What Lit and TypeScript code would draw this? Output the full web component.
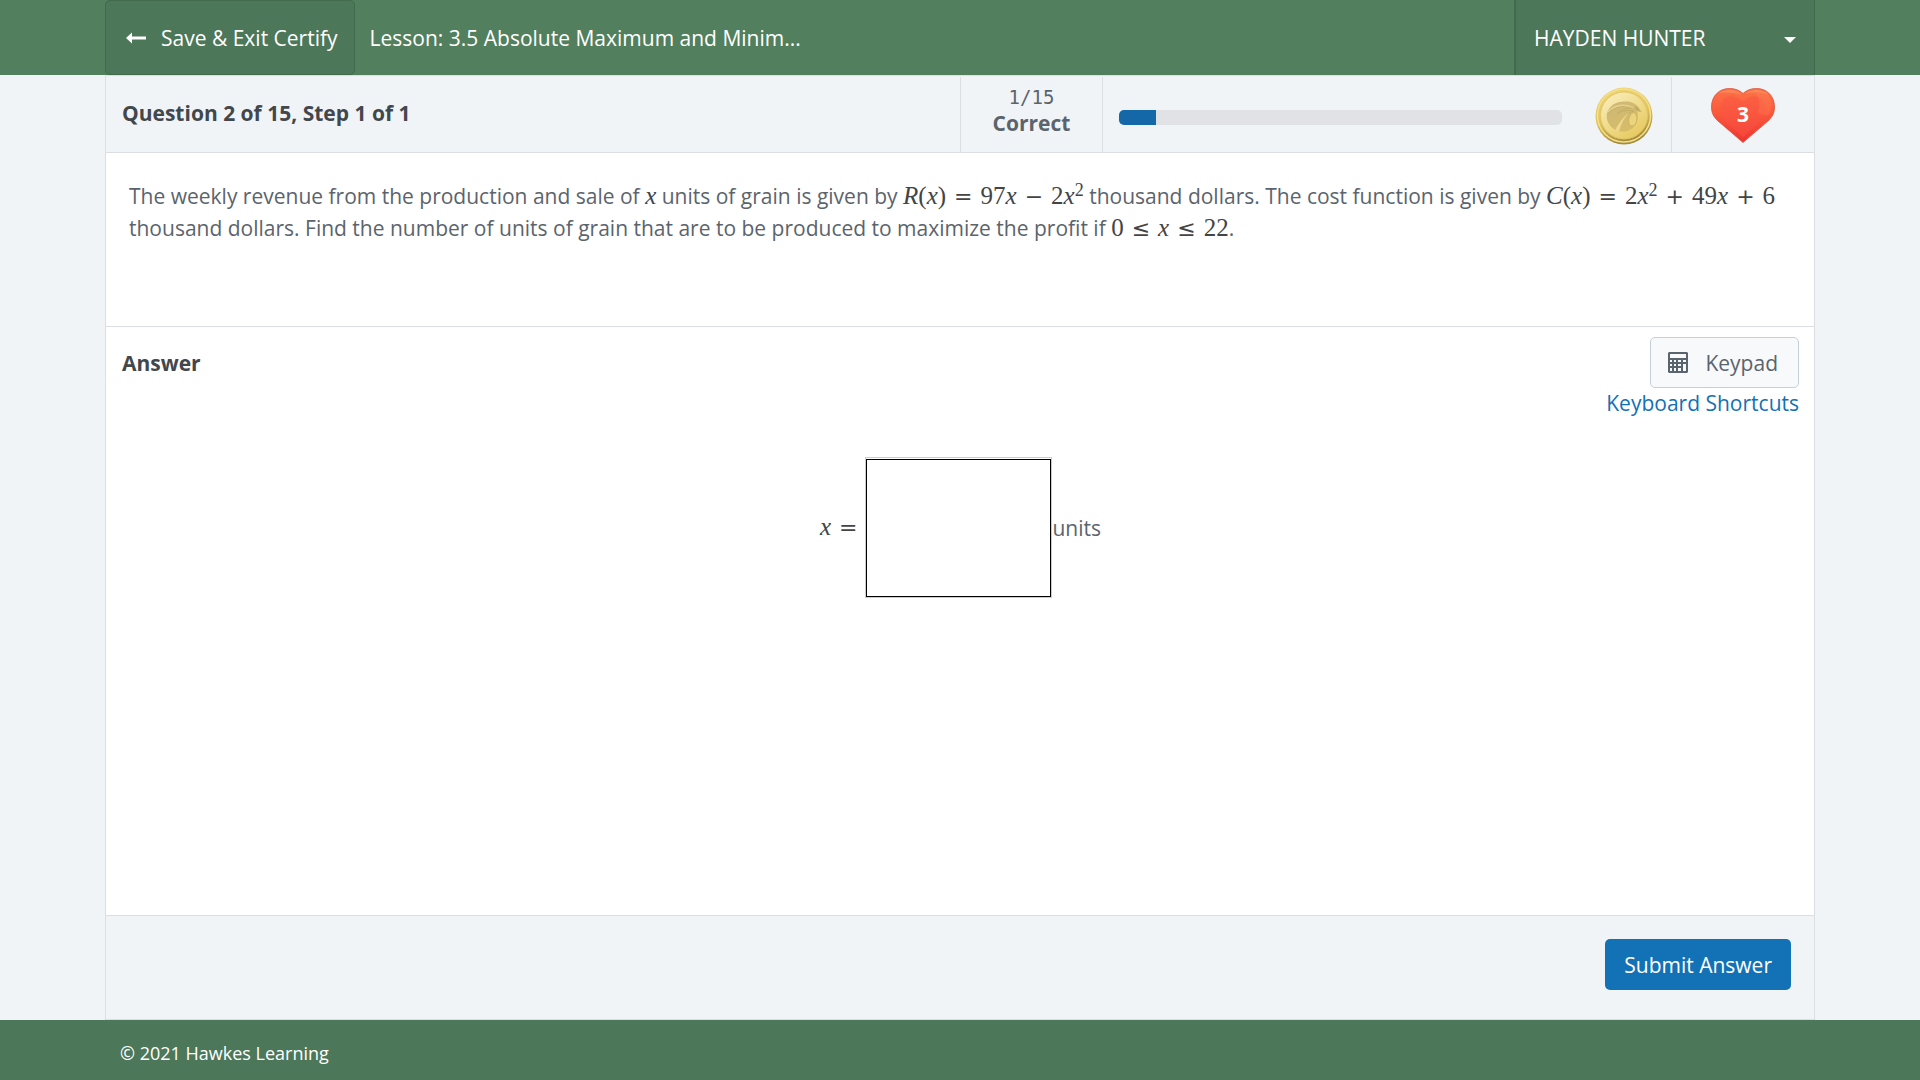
import { LitElement, html, svg, css } from "lit";
import { customElement, property, state } from "lit/decorators.js";

const arrow = svg`<path d="M6 1.5v4h14v3H6v4L0 7z" fill="#fff"/>`;

@customElement("reward-coin")
export class RewardCoin extends LitElement {
  static styles = css`
    :host { display: block; }
    .coin { display: block; width: 58px; height: 58px; }
  `;

  render() {
    return html`<svg class="coin" viewBox="0 0 58 58" role="img" aria-label="Mastery coin">
      <defs>
        <linearGradient id="rim" x1="0" y1="0" x2="0.3" y2="1">
          <stop offset="0" stop-color="#f0d87c" />
          <stop offset="0.6" stop-color="#dfc25c" />
          <stop offset="1" stop-color="#a38c3c" />
        </linearGradient>
        <linearGradient id="face" x1="0.1" y1="0" x2="0.8" y2="1">
          <stop offset="0" stop-color="#fbeec0" />
          <stop offset="0.5" stop-color="#f0dc8c" />
          <stop offset="1" stop-color="#e6c75c" />
        </linearGradient>
        <linearGradient id="hawk" x1="0" y1="0" x2="0.6" y2="1">
          <stop offset="0" stop-color="#cdb878" />
          <stop offset="1" stop-color="#d6bd68" />
        </linearGradient>
      </defs>
      <circle cx="29" cy="29" r="28.5" fill="url(#rim)" />
      <circle cx="29" cy="28.5" r="26.5" fill="none" stroke="#f6df88" stroke-width="1.5" />
      <circle cx="29" cy="28.5" r="23.5" fill="url(#face)" stroke="#e2c868" stroke-width="1" />
      <path d="M12 27C14 18 22 14 31 14.500C37 14.500 43 17 46.500 25L42.500 24.500C43.500 32 42 39 35 43C28 46.500 18 44 14 37C11.800 33.500 11.300 30.500 12 27Z" fill="url(#hawk)" />
      <path d="M12.500 27C19 19.500 28 17.500 37 21C31 21 25 23 22 27C27 24 33 22.500 39 24C31 26 25 34 20.500 43" fill="none" stroke="#bfa962" stroke-width="0.7" />
      <path d="M13 25C19 18.500 28 16.500 38 20.500" fill="none" stroke="#e6d28e" stroke-width="1.3" />
      <path d="M34 25.500C28 30 23 37 20 43.500L24 44.500C26 37 29 31 34 25.500Z" fill="#eed78c" />
      <path d="M39 25C34 28 32.500 33 34.500 38C36.500 40 39.500 39 41 36C42.500 32 42 28 39 25Z" fill="#ecd47c" stroke="#c6ad60" stroke-width="0.8" />
      <path d="M40 18.500L46 25L41 22.500Z" fill="#b9a35e" />
    </svg>`;
  }
}

@customElement("lives-heart")
export class LivesHeart extends LitElement {
  @property({ type: Number }) count = 0;

  static styles = css`
    :host { display: grid; place-items: center; }
    .heart, .count { grid-area: 1 / 1; }
    .heart { display: block; width: 64px; height: 55px; }
    .count { color: #fff; font-weight: 700; font-size: 21px; line-height: 24px; padding-bottom: 4px; }
  `;

  render() {
    return html`<svg class="heart" viewBox="0 0 64 55" aria-hidden="true">
        <defs>
          <linearGradient id="body" x1="0" y1="0" x2="0" y2="1">
            <stop offset="0" stop-color="#fb7348" />
            <stop offset="0.4" stop-color="#fb5c3c" />
            <stop offset="1" stop-color="#ee3432" />
          </linearGradient>
        </defs>
        <path d="M32 54.500L7 33C2 28.500 0.500 24 0.500 19C0.500 8 8 0.500 18.500 0.500C24.500 0.500 29 2.500 32 5.500C35 2.500 39.500 0.500 45.500 0.500C56 0.500 63.500 8 63.500 19C63.500 24 62 28.500 57 33Z" fill="url(#body)" stroke="#d9503c" stroke-width="0.8" />
        <path d="M32 49L13 32C8 26 9 15 13 11C18 6 27 8 32 14C37 8 46 6 51 11C55 15 56 26 51 32Z" fill="#fa5444" opacity="0.5" />
        <path d="M42 4C48 2 54 3 58 8C62 14 61 23 57 27C54 28 50 27 47 24C50 15 48 8 42 4Z" fill="#ff8a5c" opacity="0.25" />
        <path d="M8 5C14 0.500 25 1 31 7C24 4 15 4 8 5Z" fill="#ff9462" opacity="0.6" />
        <path d="M34 6C40 0.500 52 0.500 58 7C50 3 41 4 34 6Z" fill="#ff9462" opacity="0.6" />
      </svg>
      <span class="count">${this.count}</span>`;
  }
}

@customElement("app-root")
export class AppRoot extends LitElement {
  @state() private correct = 1;
  @state() private needed = 15;

  static styles = css`
    :host {
      display: flex;
      flex-direction: column;
      min-height: 100vh;
      background: #f0f4f7;
      color: #5b646c;
      font-family: "Open Sans", "Noto Sans", sans-serif;
      font-size: 21px;
      line-height: 32px;
    }
    *, *::before, *::after { box-sizing: border-box; }
    button, input { font: inherit; }
    h1, h2, p { margin: 0; }

    .top { display: flex; height: 75px; padding: 0 105px; background: #527f5d; color: #fff; }
    .exit {
      display: flex; align-items: center; gap: 15px;
      padding: 0 16px 0 20px;
      border: 1px solid #426a4d; border-radius: 5px;
      background: #4c7759; color: #fff; text-decoration: none;
    }
    .exit svg { width: 20px; height: 14px; }
    .lesson { display: flex; align-items: center; padding-left: 15px; font-size: 21px; font-weight: 400; }
    .user {
      display: flex; align-items: center; justify-content: space-between;
      width: 301px; margin-left: auto; padding: 0 18px;
      border: 0 solid #426a4d; border-width: 0 1px 0 2px;
      background: #4c7759; color: #fff; text-align: left;
    }
    .user svg { width: 12px; height: 6px; margin-top: 4px; }

    .sheet {
      flex: 1; display: flex; flex-direction: column;
      margin: 0 105px; border: 1px solid #dcdfe1; background: #fff;
    }
    .status {
      display: flex; height: 77px;
      background: #f0f4f7; border-bottom: 1px solid #dcdfe1;
    }
    .step {
      flex: 1; display: flex; align-items: center;
      padding: 0 16px 2px; font-weight: 700; color: #42474b;
    }
    .tally {
      display: flex; flex-direction: column; align-items: center; justify-content: center;
      width: 143px; padding-bottom: 10px; margin-top: 1px;
      border: 0 solid #dcdfe1; border-width: 0 1px;
      line-height: 26px;
    }
    .ratio { font-family: "DejaVu Sans Mono", monospace; font-size: 19px; }
    .meter { display: flex; align-items: center; gap: 33px; width: 568px; padding: 7px 18px 0 16px; }
    .track {
      flex: 1; height: 15px; overflow: hidden;
      border-radius: 5px; background: #e1e2e6;
    }
    .fill { height: 100%; background: #1568a8; }
    .meter reward-coin { margin-top: -4px; }
    .lives { width: 143px; margin-top: 1px; border-left: 1px solid #dcdfe1; display: flex; justify-content: center; padding-top: 2px; }

    .problem { min-height: 174px; padding: 27px 32px 0 23px; border-bottom: 1px solid #dcdfe1; }
    .math { font-family: "Liberation Serif", serif; font-size: 25px; line-height: 24px; color: #444; white-space: nowrap; }
    .math sup { font-size: 18px; line-height: 0; vertical-align: 8px; }
    .op { font-family: "DejaVu Sans", sans-serif; font-size: 22px; margin: 0 8px; }

    .answer { flex: 1; padding: 10px 15px 32px 16px; }
    .head { display: flex; justify-content: space-between; align-items: flex-start; }
    .head h2 { font-size: 21px; line-height: 32px; font-weight: 700; color: #42474b; padding-top: 10px; }
    .tools { display: flex; flex-direction: column; align-items: flex-end; }
    .keypad {
      display: flex; align-items: center; gap: 17px;
      height: 51px; padding: 0 20px 0 17px;
      border: 1px solid #c3d0da; border-radius: 5px;
      background: #f8f9fb; color: #5b646c;
    }
    .keypad svg { width: 20px; height: 21px; }
    .shortcuts { color: #1371b5; text-decoration: none; line-height: 30px; }
    .entry { display: flex; justify-content: center; align-items: center; padding-top: 39px; }
    .field { width: 187px; height: 141px; padding: 1px 0 0; border: 1px solid #ccc; background: #fff; }
    .field input {
      display: block; width: 100%; height: 100%; padding: 0 12px;
      border: 1px solid #000; border-radius: 0; background: #fff;
      text-align: center; color: #444; outline: none;
    }

    .actions {
      display: flex; justify-content: flex-end; align-items: flex-start;
      height: 104px; padding: 23px 23px 0;
      background: #f0f4f7; border-top: 1px solid #dcdfe1;
    }
    .submit {
      height: 51px; padding: 0 19px;
      border: 0; border-radius: 5px; background: #1371b5; color: #fff;
    }
    .bottom {
      display: flex; align-items: center; height: 60px; padding: 6px 120px 0;
      background: #4c7759; color: #fff; font-size: 18px;
    }
  `;

  private op(sign: string) {
    return html`<span class="op">${sign}</span>`;
  }

  render() {
    const share = ((this.correct / this.needed) * 125).toFixed(1);
    return html`
      <header class="top">
        <a class="exit" href="#exit">
          <svg viewBox="0 0 20 14" aria-hidden="true">${arrow}</svg>
          <span>Save &amp; Exit Certify</span>
        </a>
        <h1 class="lesson">Lesson: 3.5 Absolute Maximum and Minim...</h1>
        <button class="user" type="button">
          <span>HAYDEN HUNTER</span>
          <svg viewBox="0 0 12 6" aria-hidden="true"><path d="M0 0h12L6 6z" fill="#fff" /></svg>
        </button>
      </header>

      <main class="sheet">
        <section class="status">
          <div class="step">Question 2 of 15, Step 1 of 1</div>
          <div class="tally">
            <span class="ratio">${this.correct}/${this.needed}</span>
            <strong>Correct</strong>
          </div>
          <div class="meter">
            <div class="track"><div class="fill" style="width: ${share}%"></div></div>
            <reward-coin></reward-coin>
          </div>
          <div class="lives"><lives-heart .count=${3}></lives-heart></div>
        </section>

        <section class="problem">
          <p>
            The weekly revenue from the production and sale of <span class="math"><i>x</i></span> units of grain is given by
            <span class="math"><i>R</i>(<i>x</i>)${this.op("=")}97<i>x</i>${this.op("−")}2<i>x</i><sup>2</sup></span>
            thousand dollars. The cost function is given by
            <span class="math"><i>C</i>(<i>x</i>)${this.op("=")}2<i>x</i><sup>2</sup>${this.op("+")}49<i>x</i>${this.op("+")}6</span>
            thousand dollars. Find the number of units of grain that are to be produced to maximize the profit if
            <span class="math">0${this.op("≤")}<i>x</i>${this.op("≤")}22</span>.
          </p>
        </section>

        <section class="answer">
          <div class="head">
            <h2>Answer</h2>
            <div class="tools">
              <button class="keypad" type="button">
                <svg viewBox="0 0 20 21" aria-hidden="true">
                  <path fill="#5b646c" fill-rule="evenodd" d="M1 0h18l1 1v19l-1 1H1l-1-1V1zM2 2v4h16V2zM2 8v2h2V8zM6 8v2h2V8zM10 8v2h3V8zM15 8v2h3V8zM2 12v2h2v-2zM6 12v2h2v-2zM10 12v2h3v-2zM15 12v7h3v-7zM2 16v3h2v-3zM6 16v3h2v-3zM10 16v3h3v-3z" />
                </svg>
                <span>Keypad</span>
              </button>
              <a class="shortcuts" href="#shortcuts">Keyboard Shortcuts</a>
            </div>
          </div>
          <div class="entry">
            <label for="units-value" class="math"><i>x</i>${this.op("=")}</label>
            <div class="field"><input id="units-value" type="text" autocomplete="off" /></div>
            <span>units</span>
          </div>
        </section>

        <div class="actions"><button class="submit" type="button">Submit Answer</button></div>
      </main>

      <footer class="bottom">© 2021 Hawkes Learning</footer>
    `;
  }
}
